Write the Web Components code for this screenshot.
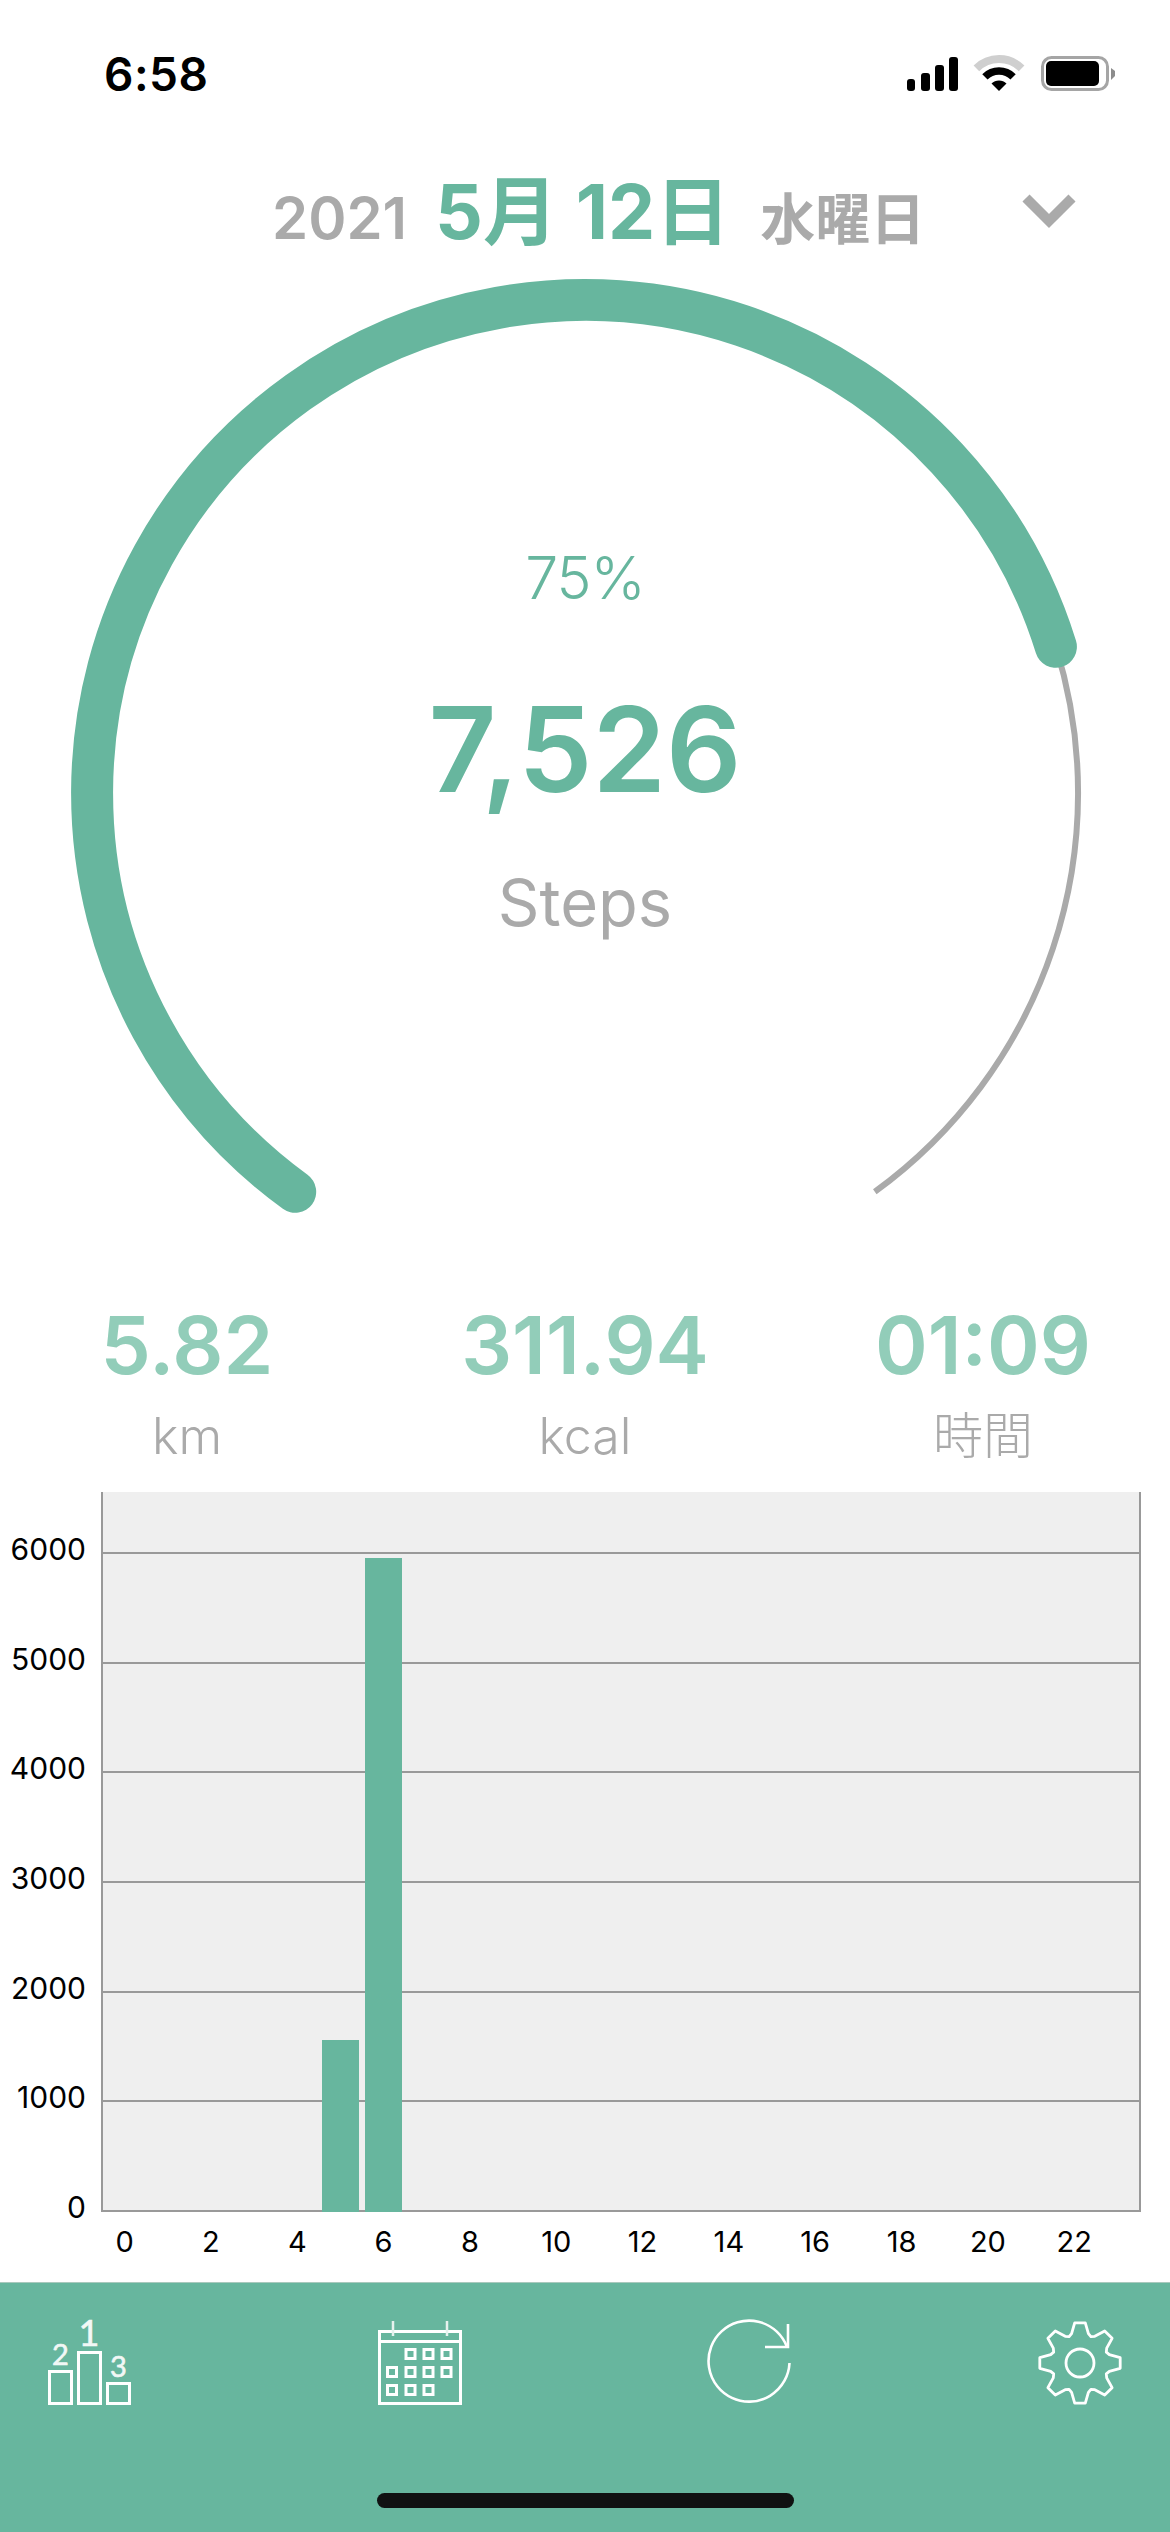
<!DOCTYPE html>
<html lang="ja">
<head>
<meta charset="utf-8">
<title>Steps</title>
<style>
  html, body { margin: 0; background: #fff; }
  body {
    width: 1170px;
    height: 2532px;
    overflow: hidden;
    font-family: Inter, "Noto Sans CJK JP", sans-serif;
  }
</style>
</head>
<body>
  <status-bar time="6:58"></status-bar>
  <date-header>
    <span slot="year">2021</span>
    <span slot="date">5月 12日</span>
    <span slot="weekday">水曜日</span>
  </date-header>
  <step-gauge percent="75%" steps="7,526" label="Steps"></step-gauge>
  <stat-row>
    <stat-item value="5.82" unit="km"></stat-item>
    <stat-item value="311.94" unit="kcal"></stat-item>
    <stat-item value="01:09" unit="時間"></stat-item>
  </stat-row>
  <hourly-chart></hourly-chart>
  <tab-bar>
    <podium-icon></podium-icon>
    <calendar-icon></calendar-icon>
    <refresh-icon></refresh-icon>
    <gear-icon></gear-icon>
  </tab-bar>

<script>
const GREEN = '#67b69e';

function shadow(el, html) {
  if (!el.shadowRoot) el.attachShadow({ mode: 'open' });
  el.shadowRoot.innerHTML = html;
}

class StatusBar extends HTMLElement {
  connectedCallback() {
    shadow(this, `
      <style>
        :host { display: flex; height: 130px; box-sizing: border-box; padding: 55px 55px 0 104px; justify-content: space-between; align-items: flex-start; }
        #time { font: 600 46px/44px Inter, sans-serif; color: #000; letter-spacing: 0.5px; margin-top: -3px; }
        svg { display: block; }
      </style>
      <div id="time">${this.getAttribute('time')}</div>
      <svg width="208" height="36" viewBox="0 0 208 36">
        <rect x="0" y="24" width="8" height="12" rx="3"/>
        <rect x="14" y="18" width="9" height="18" rx="3"/>
        <rect x="28" y="10" width="9" height="26" rx="3"/>
        <rect x="42" y="2" width="9" height="34" rx="3"/>
        <g transform="translate(68,0)" fill="none">
          <path d="M1.4 13.4A32 32 0 0 1 46.6 13.4" stroke="#cfcfcf" stroke-width="8"/>
          <path d="M9.9 21.9A20 20 0 0 1 38.1 21.9" stroke="#000" stroke-width="7.5"/>
          <path d="M24 36L16.5 28.5A10.6 10.6 0 0 1 31.5 28.5Z" fill="#000"/>
        </g>
        <rect x="135.5" y="2.5" width="65" height="32" rx="9" fill="none" stroke="#a5a5a5" stroke-width="3"/>
        <rect x="139" y="6" width="53" height="25" rx="5"/>
        <path d="M204 13L208 16V21L204 25Z" fill="#8c8c8c"/>
      </svg>`);
  }
}

class DateHeader extends HTMLElement {
  connectedCallback() {
    shadow(this, `
      <style>
        :host { display: flex; height: 130px; box-sizing: border-box; padding: 42px 94px 0 272px; align-items: baseline; font-family: Inter, "Noto Sans CJK JP", sans-serif; }
        div { line-height: 80px; white-space: nowrap; }
        #year { font-size: 58px; font-weight: 600; color: #aaa; margin-right: 28px; }
        #date { font-size: 75px; font-weight: 700; color: ${GREEN}; margin-right: 30px; }
        #weekday { font-size: 55px; font-weight: 700; color: #aaa; }
        svg { align-self: flex-start; margin: 22px 0 0 auto; display: block; }
      </style>
      <div id="year"><slot name="year"></slot></div>
      <div id="date"><slot name="date"></slot></div>
      <div id="weekday"><slot name="weekday"></slot></div>
      <svg width="54" height="35" viewBox="0 0 54 35"><path d="M4 4L27 27L50 4" fill="none" stroke="#aaa" stroke-width="10"/></svg>`);
  }
}

class StepGauge extends HTMLElement {
  connectedCallback() {
    shadow(this, `
      <style>
        :host { display: grid; height: 1030px; }
        svg, #text { grid-area: 1 / 1; }
        svg { display: block; }
        #text { display: flex; flex-direction: column; align-items: center; padding-top: 288px; font-family: Inter, sans-serif; }
        #percent { font-size: 59px; line-height: 60px; font-weight: 350; color: ${GREEN}; letter-spacing: -1px; }
        #steps { font-size: 118px; line-height: 120px; font-weight: 600; color: ${GREEN}; margin-top: 81px; }
        #label { font-size: 65px; line-height: 66px; font-weight: 400; color: #aaa; margin-top: 61px; }
      </style>
      <svg width="1170" height="1030" viewBox="0 260 1170 1030" fill="none">
        <path d="M1055.9 646.8A493 493 0 0 1 874.8 1191.8" stroke="#aaa" stroke-width="6"/>
        <path d="M295.2 1191.8A493 493 0 1 1 1055.9 646.8" stroke="${GREEN}" stroke-width="42" stroke-linecap="round"/>
      </svg>
      <div id="text">
        <div id="percent">${this.getAttribute('percent')}</div>
        <div id="steps">${this.getAttribute('steps')}</div>
        <div id="label">${this.getAttribute('label')}</div>
      </div>`);
  }
}

class StatRow extends HTMLElement {
  connectedCallback() {
    shadow(this, `
      <style>
        :host { display: grid; grid-template-columns: repeat(3, 1fr); column-gap: 98px; height: 202px; box-sizing: border-box; padding: 0 37px; }
      </style>
      <slot></slot>`);
  }
}

class StatItem extends HTMLElement {
  connectedCallback() {
    shadow(this, `
      <style>
        :host { display: flex; flex-direction: column; align-items: center; font-family: Inter, "Noto Sans CJK JP", sans-serif; }
        #value { font-size: 80px; line-height: 80px; font-weight: 600; color: #92cdb9; margin-top: 15px; }
        #unit { font-size: 50px; line-height: 50px; color: #aaa; margin-top: 26px; font-weight: 300; }
      </style>
      <div id="value">${this.getAttribute('value')}</div>
      <div id="unit">${this.getAttribute('unit')}</div>`);
  }
}

const HOURLY = { 5: 1566, 6: 5960 };

class HourlyChart extends HTMLElement {
  connectedCallback() {
    const unit = 109.67;
    const ticks = [6000, 5000, 4000, 3000, 2000, 1000, 0].map(v => `<div>${v}</div>`).join('');
    const bars = Array.from({ length: 24 }, (_, h) =>
      `<i style="height:${(HOURLY[h] || 0) / 1000 * unit}px"></i>`).join('');
    const hours = Array.from({ length: 12 }, (_, i) => `<div><span>${i * 2}</span></div>`).join('');
    shadow(this, `
      <style>
        :host { display: grid; grid-template-columns: 101px 1040px; grid-template-rows: 720px auto; height: 790px; color: #000; font: 400 29px Inter, sans-serif; }
        #y { grid-row: 1 / span 2; padding-top: 3px; font-size: 30px; }
        #y div { height: ${unit}px; line-height: ${unit}px; text-align: right; padding-right: 15px; }
        #plot {
          box-sizing: border-box;
          border: solid #999;
          border-width: 0 2px;
          background: repeating-linear-gradient(to top, #999 0 2px, transparent 2px ${unit}px) #efefef;
          display: grid;
          grid-template-columns: repeat(24, 1fr);
          align-items: end;
        }
        #plot i { display: block; margin: 0 3px; background: ${GREEN}; }
        #x { display: flex; padding: 13px 0 0 2px; line-height: 34px; }
        #x div { flex: 0 0 86.33px; box-sizing: border-box; padding-right: 43.17px; display: flex; justify-content: center; white-space: nowrap; }
      </style>
      <div id="y">${ticks}</div>
      <div id="plot">${bars}</div>
      <div id="x">${hours}</div>`);
  }
}

class TabBar extends HTMLElement {
  connectedCallback() {
    shadow(this, `
      <style>
        :host { display: flex; flex-direction: column; height: 250px; box-sizing: border-box; background: ${GREEN}; border-top: 1px solid #a9c9bd; padding: 38px 48px 0; }
        #icons { display: flex; justify-content: space-between; height: 84px; }
        #home { align-self: center; width: 417px; height: 15px; border-radius: 8px; background: #101212; margin-top: 88px; }
      </style>
      <div id="icons"><slot></slot></div>
      <div id="home"></div>`);
  }
}

class TabIcon extends HTMLElement {
  connectedCallback() {
    shadow(this, `
      <style>
        :host { display: block; width: 84px; height: 84px; }
        svg { display: block; overflow: visible; }
        text { font-family: Lato, sans-serif; font-weight: 400; fill: #f2f8f6; stroke: #f2f8f6; stroke-width: 0.6; text-anchor: middle; }
      </style>
      <svg width="84" height="84" viewBox="0 0 84 84" fill="none" stroke="#fff" stroke-width="3">${this.art()}</svg>`);
  }
}

class PodiumIcon extends TabIcon {
  art() {
    return `
      <rect x="1.5" y="50.5" width="22" height="32"/>
      <rect x="30.5" y="31.5" width="22" height="51"/>
      <rect x="59.5" y="62.5" width="22" height="20"/>
      <text x="41" y="25" font-size="36">1</text>
      <text x="12.5" y="44" font-size="29">2</text>
      <text x="70.5" y="56" font-size="29">3</text>`;
  }
}

class CalendarIcon extends TabIcon {
  art() {
    const cols = [14, 32.5, 50.5, 68.5];
    const rows = [[33, [1, 2, 3]], [51, [0, 1, 2, 3]], [69, [0, 1, 2]]];
    let squares = '';
    rows.forEach(([y, list]) => list.forEach(c => {
      squares += `<rect x="${cols[c] - 4.5}" y="${y - 4.5}" width="9" height="9"/>`;
    }));
    return `
      <rect x="1.5" y="10.5" width="81" height="72"/>
      <path d="M1.5 20.5H82.5"/>
      <path d="M15 0V15M69 0V15" stroke="#e6f2ee" stroke-width="2.5"/>
      ${squares}`;
  }
}

class RefreshIcon extends TabIcon {
  art() {
    return `
      <path d="M81.5 42A40.5 40.5 0 1 1 79 26" stroke-width="2.6"/>
      <path d="M80 3V26H57" stroke-width="2.6"/>`;
  }
}

class GearIcon extends TabIcon {
  art() {
    const c = 42;
    const pts = [];
    const at = (deg, r) => {
      const a = (deg - 90) * Math.PI / 180;
      return `${(c + r * Math.cos(a)).toFixed(1)} ${(c + r * Math.sin(a)).toFixed(1)}`;
    };
    for (let i = 0; i < 8; i++) {
      const d = i * 45;
      pts.push(at(d - 16, 30.5), at(d - 7.5, 40.5), at(d + 7.5, 40.5), at(d + 16, 30.5), at(d + 22.5, 28.5));
    }
    return `
      <path d="M${pts.join('L')}Z" stroke-width="2.8" stroke-linejoin="round"/>
      <circle cx="42" cy="42" r="14" stroke-width="2.8"/>`;
  }
}

customElements.define('status-bar', StatusBar);
customElements.define('date-header', DateHeader);
customElements.define('step-gauge', StepGauge);
customElements.define('stat-row', StatRow);
customElements.define('stat-item', StatItem);
customElements.define('hourly-chart', HourlyChart);
customElements.define('tab-bar', TabBar);
customElements.define('podium-icon', PodiumIcon);
customElements.define('calendar-icon', CalendarIcon);
customElements.define('refresh-icon', RefreshIcon);
customElements.define('gear-icon', GearIcon);
</script>
</body>
</html>
